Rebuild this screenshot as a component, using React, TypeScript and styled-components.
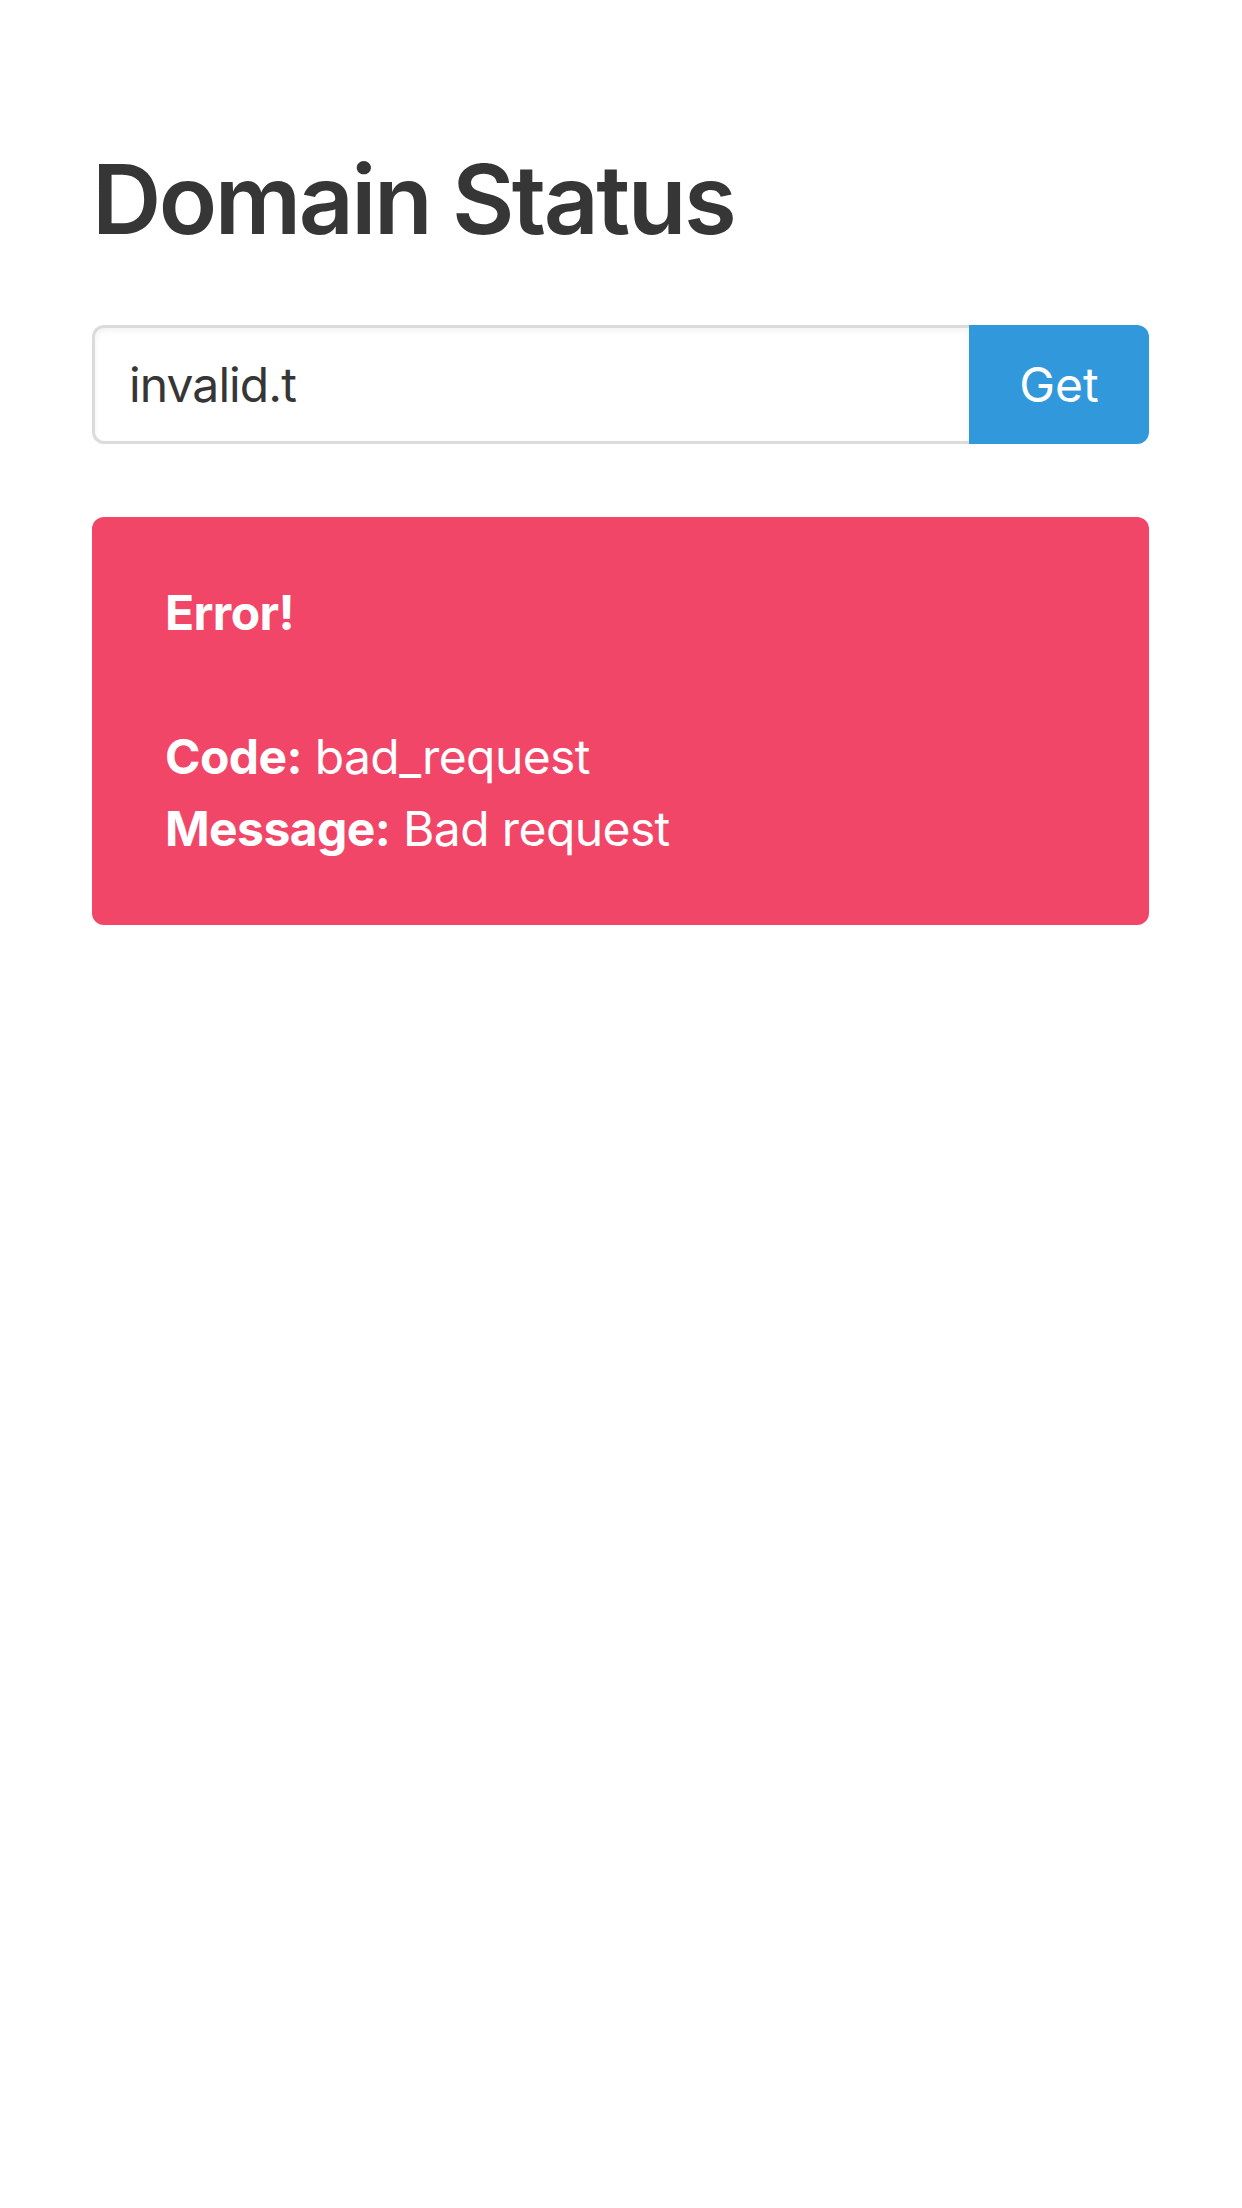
import React, {useState} from 'react';
import styled, {createGlobalStyle} from "styled-components";

const GlobalStyle = createGlobalStyle`
  body {
    margin: 0;
    background: #ffffff;
    font-family: Inter, "Noto Sans", sans-serif;
    color: #363636;
  }
`

const Section = styled.section`
  padding: 145px 93px 0 92px;
`

const Title = styled.h1`
  margin: 0 0 72px 0;
  font-size: 96px;
  line-height: 108px;
  font-weight: 600;
  color: #363636;
  letter-spacing: -2.5px;
`

const Field = styled.form`
  display: flex;
  height: 119px;
`

const Input = styled.input`
  flex: 1;
  min-width: 0;
  box-sizing: border-box;
  height: 100%;
  margin: 0;
  padding: 0 33px 0 34px;
  border: 3px solid #dbdbdb;
  border-right: none;
  border-radius: 12px 0 0 12px;
  box-shadow: inset 0 3px 6px rgba(10, 10, 10, 0.05);
  font-family: inherit;
  font-size: 48px;
  letter-spacing: -0.9px;
  color: #363636;
  outline: none;
`

const Button = styled.button`
  width: 180px;
  height: 100%;
  margin: 0;
  border: none;
  border-radius: 0 12px 12px 0;
  background: #3298dc;
  color: #ffffff;
  font-family: inherit;
  font-size: 48px;
  cursor: pointer;
`

const Notification = styled.div`
  margin-top: 73px;
  padding: 60px 60px 60px 73px;
  border-radius: 12px;
  background: #f14668;
  color: #ffffff;
  font-size: 48px;
  line-height: 72px;
  letter-spacing: -0.6px;
`

const Line = styled.div<{ $gap?: boolean }>`
  margin-bottom: ${props => props.$gap ? '72px' : '0'};
`

const Label = styled.strong`
  font-weight: 700;
`

function App() {
    const [domain, setDomain] = useState("invalid.t")
    return (
        <Section>
            <GlobalStyle/>
            <Title>Domain Status</Title>
            <Field onSubmit={e => e.preventDefault()}>
                <Input value={domain} onChange={e => setDomain(e.target.value)}/>
                <Button type={"submit"}>Get</Button>
            </Field>
            <Notification>
                <Line $gap><Label>Error!</Label></Line>
                <Line><Label>Code:</Label> bad_request</Line>
                <Line><Label>Message:</Label> Bad request</Line>
            </Notification>
        </Section>
    );
}

export default App;
